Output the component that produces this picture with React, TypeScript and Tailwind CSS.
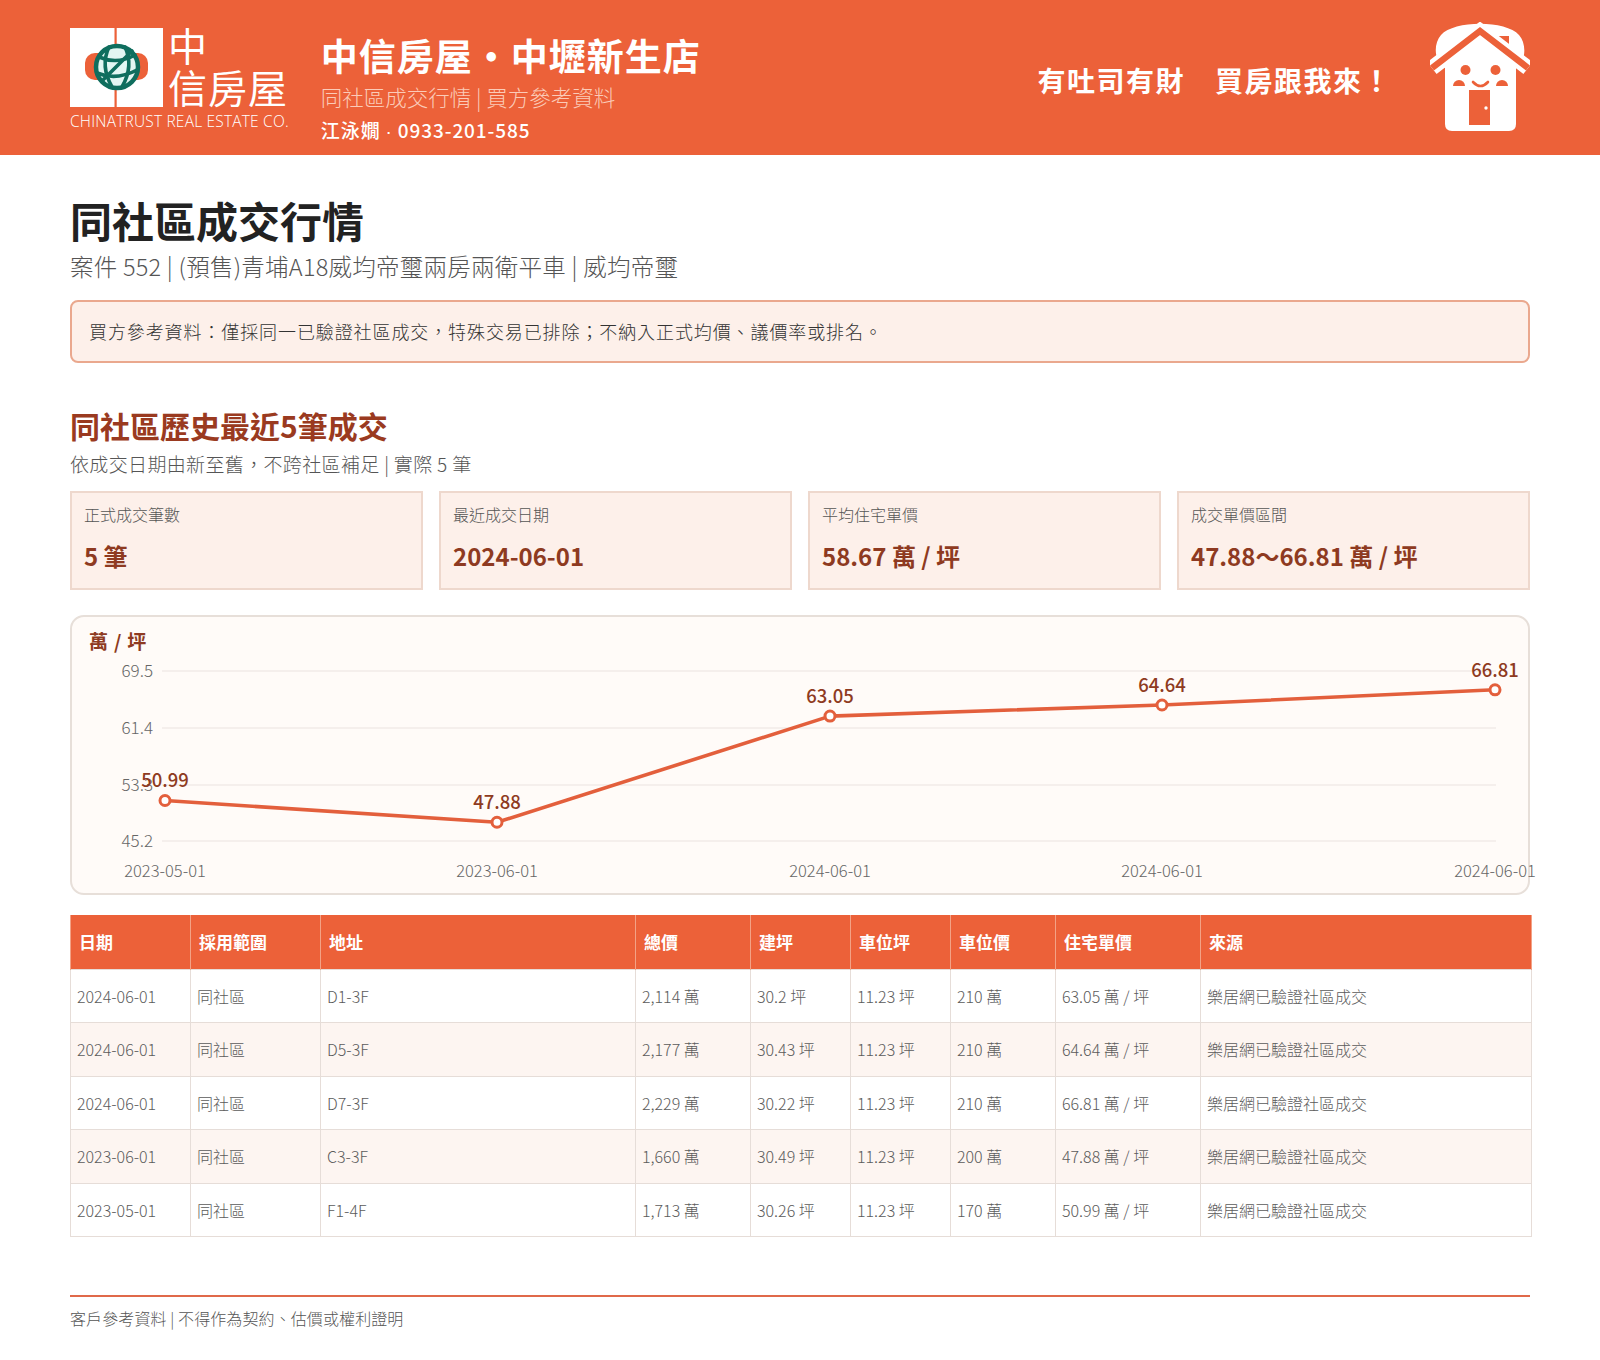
import React from "react";

const ORANGE = "#EC6139";

function Logo() {
  return (
    <div className="flex flex-col">
      <div className="flex items-start gap-[5px]">
        <svg width="93" height="79" viewBox="0 0 93 79">
          <rect x="0" y="0" width="93" height="79" fill="#ffffff" />
          <rect x="44.5" y="0" width="2.2" height="79" fill={ORANGE} />
          <rect x="15" y="25" width="63" height="27" rx="10" fill={ORANGE} />
          <circle cx="47" cy="39" r="21" fill="#e2f6f2" stroke="#0f6e5e" strokeWidth="4.5" />
          <g fill="none" stroke="#0f6e5e" strokeWidth="3.6" strokeLinecap="round">
            <path d="M29 29 Q47 37 65 27" />
            <path d="M27 45 Q46 53 67 42" />
            <path d="M39 19 Q30 38 42 59" />
            <path d="M55 19 Q64 38 52 59" />
            <path d="M32 53 L62 23" />
          </g>
        </svg>
        <div className="flex flex-col text-white font-normal text-[39px] leading-none mt-[-3px]">
          <span>中</span>
          <span className="mt-[3px] tracking-[1px]">信房屋</span>
        </div>
      </div>
      <div className="text-white text-[15.5px] leading-none mt-[7px] tracking-[0.2px] font-['Open_Sans','Liberation_Sans',sans-serif] font-light whitespace-nowrap">
        CHINATRUST REAL ESTATE CO.
      </div>
    </div>
  );
}

function HouseIcon() {
  return (
    <svg width="100" height="110" viewBox="0 0 100 110">
      <path
        d="M15 46 C 4 40, 3 22, 11 13 C 24 -2, 76 -2, 89 13 C 97 22, 96 40, 86 46 L86 102 Q86 109 79 109 L22 109 Q15 109 15 102 Z"
        fill="#ffffff"
      />
      <rect x="68" y="14" width="11" height="14" fill={ORANGE} />
      <polyline points="2,46 50,9 98,46" fill="none" stroke="#ffffff" strokeWidth="15" strokeLinejoin="miter" />
      <polyline points="2,46 50,9 98,46" fill="none" stroke={ORANGE} strokeWidth="6.5" strokeLinejoin="miter" />
      <circle cx="35.5" cy="48" r="5" fill={ORANGE} />
      <circle cx="65.5" cy="48" r="5" fill={ORANGE} />
      <path d="M23 64 A6 6 0 0 1 35 64 Z" fill={ORANGE} />
      <path d="M66 64 A6 6 0 0 1 78 64 Z" fill={ORANGE} />
      <path d="M43 60 Q50.5 68 58 60" fill="none" stroke={ORANGE} strokeWidth="2.6" strokeLinecap="round" />
      <rect x="39" y="68" width="21" height="35" fill={ORANGE} />
      <circle cx="56" cy="86" r="1.7" fill="#ffffff" />
    </svg>
  );
}

type Pt = { x: number; v: number; label: string };

function Chart() {
  const yOf = (v: number) => 224 - (v - 45.2) * (170 / 24.3);
  const pts: Pt[] = [
    { x: 93, v: 50.99, label: "2023-05-01" },
    { x: 425, v: 47.88, label: "2023-06-01" },
    { x: 758, v: 63.05, label: "2024-06-01" },
    { x: 1090, v: 64.64, label: "2024-06-01" },
    { x: 1423, v: 66.81, label: "2024-06-01" },
  ];
  const grid = [
    { v: 69.5, y: 54 },
    { v: 61.4, y: 111 },
    { v: 53.3, y: 168 },
    { v: 45.2, y: 224 },
  ];
  const poly = pts.map((p) => `${p.x},${yOf(p.v).toFixed(1)}`).join(" ");
  return (
    <div className="mt-[25px] h-[280px] rounded-[14px] border-2 border-[#e7dfd9] bg-[#fffbf8]">
      <svg width="1457" height="276" viewBox="0 0 1457 276" className="block overflow-visible">
        <text x="17" y="32" fontSize="19" fontWeight="700" fill="#8e3a21" letterSpacing="0.8">
          萬 / 坪
        </text>
        {grid.map((g) => (
          <g key={g.v}>
            <line x1="90" y1={g.y} x2="1424" y2={g.y} stroke="#ebe4df" strokeWidth="1.2" />
            <text x="81" y={g.y + 6} fontSize="17" fontWeight="300" fill="#666666" textAnchor="end">
              {g.v.toFixed(1)}
            </text>
          </g>
        ))}
        {pts.map((p, i) => (
          <text key={"x" + i} x={p.x} y="260" fontSize="16.5" fontWeight="300" fill="#666666" textAnchor="middle">
            {p.label}
          </text>
        ))}
        <polyline points={poly} fill="none" stroke="#e35f3c" strokeWidth="3.6" strokeLinejoin="round" />
        {pts.map((p, i) => (
          <g key={"p" + i}>
            <circle cx={p.x} cy={yOf(p.v)} r="5" fill="#ffffff" stroke="#e35f3c" strokeWidth="3" />
            <text x={p.x} y={yOf(p.v) - 13} fontSize="18.5" fontWeight="500" fill="#8e3a21" textAnchor="middle">
              {p.v.toFixed(2)}
            </text>
          </g>
        ))}
      </svg>
    </div>
  );
}

const rows = [
  ["2024-06-01", "同社區", "D1-3F", "2,114 萬", "30.2 坪", "11.23 坪", "210 萬", "63.05 萬 / 坪", "樂居網已驗證社區成交"],
  ["2024-06-01", "同社區", "D5-3F", "2,177 萬", "30.43 坪", "11.23 坪", "210 萬", "64.64 萬 / 坪", "樂居網已驗證社區成交"],
  ["2024-06-01", "同社區", "D7-3F", "2,229 萬", "30.22 坪", "11.23 坪", "210 萬", "66.81 萬 / 坪", "樂居網已驗證社區成交"],
  ["2023-06-01", "同社區", "C3-3F", "1,660 萬", "30.49 坪", "11.23 坪", "200 萬", "47.88 萬 / 坪", "樂居網已驗證社區成交"],
  ["2023-05-01", "同社區", "F1-4F", "1,713 萬", "30.26 坪", "11.23 坪", "170 萬", "50.99 萬 / 坪", "樂居網已驗證社區成交"],
];

const heads = ["日期", "採用範圍", "地址", "總價", "建坪", "車位坪", "車位價", "住宅單價", "來源"];
const widths = [120, 130, 315, 115, 100, 100, 105, 145, 331];

function Table() {
  return (
    <table className="mt-[20px] w-full border-collapse table-fixed">
      <colgroup>
        {widths.map((w, i) => (
          <col key={i} style={{ width: w }} />
        ))}
      </colgroup>
      <thead>
        <tr className="bg-[#EC6139] h-[54px]">
          {heads.map((h, i) => (
            <th
              key={h}
              className={`text-left text-white text-[17px] font-bold px-[8px] border-[#f3a286] ${
                i === 0 ? "border-l" : ""
              } border-r`}
            >
              {h}
            </th>
          ))}
        </tr>
      </thead>
      <tbody>
        {rows.map((r, ri) => (
          <tr key={ri} className={`h-[53.5px] ${ri % 2 === 1 ? "bg-[#fdf5f1]" : "bg-white"}`}>
            {r.map((c, ci) => (
              <td
                key={ci}
                className="border border-[#e6ddd8] px-[6px] text-[16px] text-[#5b5b5b] font-light"
              >
                {c}
              </td>
            ))}
          </tr>
        ))}
      </tbody>
    </table>
  );
}

const cards = [
  { label: "正式成交筆數", value: "5 筆" },
  { label: "最近成交日期", value: "2024-06-01" },
  { label: "平均住宅單價", value: "58.67 萬 / 坪" },
  { label: "成交單價區間", value: "47.88～66.81 萬 / 坪" },
];

export default function App() {
  return (
    <div className="min-h-[1360px] bg-white font-['Noto_Sans_CJK_TC','Noto_Sans_CJK_SC',sans-serif]">
      <header className="h-[155px] bg-[#EC6139]">
        <div className="mx-[70px] h-full flex items-start">
          <div className="pt-[28px]">
            <Logo />
          </div>
          <div className="ml-[32px] pt-[33px] flex flex-col">
            <div className="text-white text-[37px] font-bold leading-[44px] tracking-[1px] whitespace-nowrap">中信房屋・中壢新生店</div>
            <div className="text-[#fbcbb8] text-[21.5px] font-light leading-[28px] mt-[6px] whitespace-nowrap">同社區成交行情 | 買方參考資料</div>
            <div className="text-white text-[19px] font-medium leading-[28px] mt-[5px] tracking-[0.9px] whitespace-nowrap">
              江泳嫺<span className="font-['Liberation_Sans',sans-serif] mx-[5px]">·</span>0933-201-585
            </div>
          </div>
          <div className="ml-auto pt-[60px] text-white text-[28px] leading-[40px] font-bold tracking-[1.5px] mr-[38px] whitespace-nowrap">
            有吐司有財<span className="inline-block w-[30px]" />買房跟我來！
          </div>
          <div className="pt-[22px]">
            <HouseIcon />
          </div>
        </div>
      </header>

      <main className="mx-[70px]">
        <h1 className="pt-[41px] text-[42px] leading-[48px] font-bold text-[#222222]">同社區成交行情</h1>
        <div className="mt-[7px] text-[23.5px] font-light leading-[30px] tracking-[0.25px] text-[#555555] whitespace-nowrap">
          案件 552 | (預售)青埔A18威均帝璽兩房兩衛平車 | 威均帝璽
        </div>

        <div className="mt-[19px] h-[63px] flex items-center rounded-[8px] border-2 border-[#eaa88e] bg-[#fdf0ea] px-[17px] text-[18px] font-light tracking-[0.9px] text-[#333333] whitespace-nowrap">
          買方參考資料：僅採同一已驗證社區成交，特殊交易已排除；不納入正式均價、議價率或排名。
        </div>

        <h2 className="mt-[42px] text-[30px] leading-[40px] font-bold text-[#9a3a20]">同社區歷史最近5筆成交</h2>
        <div className="mt-[6px] text-[19px] font-light tracking-[0.35px] leading-[26px] text-[#555555] whitespace-nowrap">
          依成交日期由新至舊，不跨社區補足 | 實際 5 筆
        </div>

        <div className="mt-[14px] grid grid-cols-4 gap-[16px]">
          {cards.map((c) => (
            <div key={c.label} className="h-[99px] border-2 border-[#eed8cd] bg-[#fdf0ea] px-[12px] pt-[9px]">
              <div className="text-[16px] font-light leading-[24px] text-[#555555]">{c.label}</div>
              <div className="mt-[14px] text-[24px] leading-[32px] font-bold text-[#8e3a21] whitespace-nowrap">{c.value}</div>
            </div>
          ))}
        </div>

        <Chart />
        <Table />

        <footer className="mt-[58px] border-t-2 border-[#e0694a] pt-[10px] pb-[30px] text-[16px] font-light tracking-[0.1px] leading-[22px] text-[#555555]">
          客戶參考資料 | 不得作為契約、估價或權利證明
        </footer>
      </main>
    </div>
  );
}
